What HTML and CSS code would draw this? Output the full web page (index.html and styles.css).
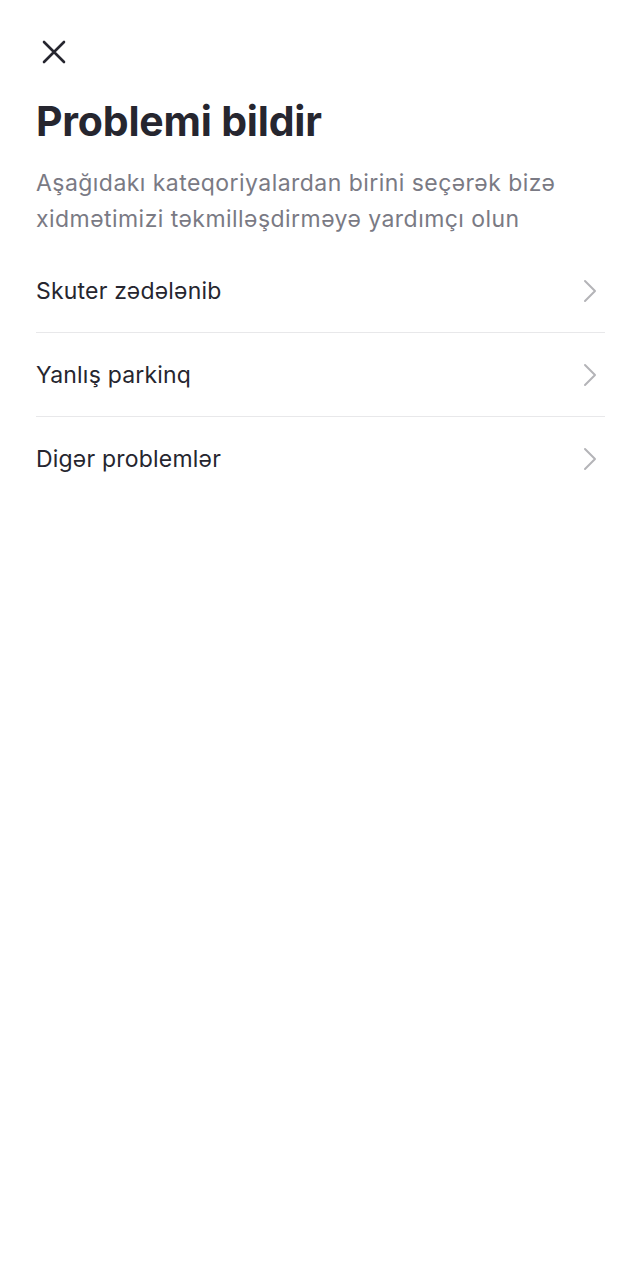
FILE: index.html
```html
<!DOCTYPE html>
<html>
    <head>
        <meta charset="UTF-8" />
        <title>Problemi bildir</title>
        <link rel="stylesheet" href="styles.css">
    </head>
    <body>
        <div class="page">
            <button type="button" class="close" aria-label="Bağla">
                <svg width="24" height="24" viewBox="0 0 24 24">
                    <path d="M2 2L22 22M22 2L2 22" stroke="#26262f" stroke-width="2.6" stroke-linecap="round" fill="none" />
                </svg>
            </button>
            <h1 class="title">Problemi bildir</h1>
            <p class="subtitle">Aşağıdakı kateqoriyalardan birini seçərək bizə xidmətimizi təkmilləşdirməyə yardımçı olun</p>
            <ul class="list">
                <li class="item">
                    <span>Skuter zədələnib</span>
                    <svg class="chevron" width="14" height="24" viewBox="0 0 14 24">
                        <path d="M2 2L12 12L2 22" stroke="#b4b4b8" stroke-width="2" stroke-linecap="round" stroke-linejoin="round" fill="none" />
                    </svg>
                </li>
                <li class="item">
                    <span>Yanlış parkinq</span>
                    <svg class="chevron" width="14" height="24" viewBox="0 0 14 24">
                        <path d="M2 2L12 12L2 22" stroke="#b4b4b8" stroke-width="2" stroke-linecap="round" stroke-linejoin="round" fill="none" />
                    </svg>
                </li>
                <li class="item">
                    <span>Digər problemlər</span>
                    <svg class="chevron" width="14" height="24" viewBox="0 0 14 24">
                        <path d="M2 2L12 12L2 22" stroke="#b4b4b8" stroke-width="2" stroke-linecap="round" stroke-linejoin="round" fill="none" />
                    </svg>
                </li>
            </ul>
        </div>
    </body>
</html>
```

FILE: styles.css
```css
body {
    margin: 0;
    background: #ffffff;
    font-family: "Inter", "Noto Sans", sans-serif;
    color: #26262f;
}
.page {
    padding: 40px 36px 0 36px;
}
.close {
    display: block;
    width: 24px;
    height: 24px;
    padding: 0;
    margin-left: 6px;
    border: none;
    background: none;
}
.title {
    margin: 29px 0 0 0;
    font-size: 41px;
    font-weight: 700;
    line-height: 56px;
    letter-spacing: -0.2px;
}
.subtitle {
    margin: 16px 0 0 0;
    font-size: 23px;
    line-height: 36px;
    letter-spacing: 0.45px;
    color: #7a7a84;
}
.list {
    list-style: none;
    margin: 12px 0 0 0;
    padding: 0;
}
.item {
    display: flex;
    justify-content: space-between;
    align-items: center;
    height: 83px;
    font-size: 23px;
    letter-spacing: 0.2px;
    border-bottom: 1px solid #e8e8ea;
}
.item:last-child {
    border-bottom: none;
}
.chevron {
    margin-right: 8px;
}
```
